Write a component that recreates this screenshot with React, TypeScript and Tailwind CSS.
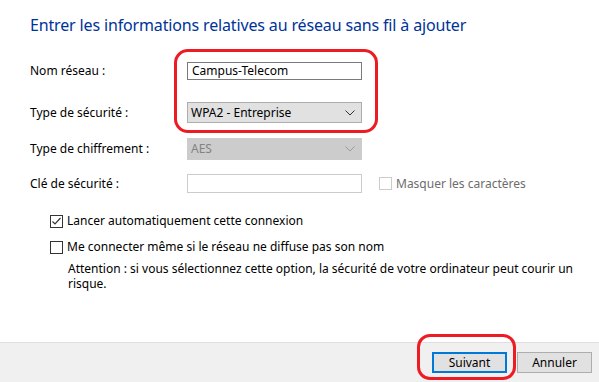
import React from 'react';

const Chevron = ({ color }: { color: string }) => (
  <svg width="10" height="6" viewBox="0 0 10 6" className="shrink-0">
    <polyline points="0.5,0.5 5,5 9.5,0.5" fill="none" stroke={color} strokeWidth="1" />
  </svg>
);

const CheckBox = ({ checked, disabled }: { checked?: boolean; disabled?: boolean }) => (
  <div
    className={`w-[13px] h-[13px] border bg-white flex items-center justify-center shrink-0 ${
      disabled ? 'border-[#cccccc]' : 'border-[#333333]'
    }`}
  >
    {checked && (
      <svg width="11" height="11" viewBox="0 0 11 11">
        <polyline points="1.5,5.5 4,8 9.5,2" fill="none" stroke="#333333" strokeWidth="1.2" />
      </svg>
    )}
  </div>
);

export default function App() {
  return (
    <div className="relative w-[599px] h-[382px] bg-white flex flex-col overflow-hidden text-[12px] text-black font-['Segoe_UI','Noto_Sans',sans-serif]">
      <div className="flex-1 pl-[30px]">
        <h1 className="pt-[14px] text-[16px] leading-[22px] tracking-[-0.15px] text-[#003399]">
          Entrer les informations relatives au réseau sans fil à ajouter
        </h1>

        {/* champs */}
        <div className="mt-[26px] flex items-center h-[18px]">
          <span className="w-[157px]">Nom réseau :</span>
          <div className="w-[175px] h-[18px] border border-[#7a7a7a] flex items-center px-[4px]">
            Campus-Telecom
          </div>
        </div>

        <div className="mt-[22px] flex items-center h-[21px]">
          <span className="w-[157px]">Type de sécurité :</span>
          <div className="w-[175px] h-[21px] border border-[#adadad] bg-[#e1e1e1] flex items-center justify-between pl-[3px] pr-[6px]">
            <span>WPA2 - Entreprise</span>
            <Chevron color="#333333" />
          </div>
        </div>

        <div className="mt-[15px] flex items-center h-[22px]">
          <span className="w-[157px]">Type de chiffrement :</span>
          <div className="w-[175px] h-[22px] border border-[#cccccc] bg-[#cccccc] text-[#838383] flex items-center justify-between pl-[3px] pr-[6px]">
            <span>AES</span>
            <Chevron color="#9a9a9a" />
          </div>
        </div>

        <div className="mt-[14px] flex items-center h-[19px]">
          <span className="w-[157px]">Clé de sécurité :</span>
          <div className="w-[175px] h-[19px] border border-[#cccccc] bg-white" />
          <div className="ml-[17px] flex items-center gap-[4px] text-[#6d6d6d]">
            <CheckBox disabled />
            <span>Masquer les caractères</span>
          </div>
        </div>

        {/* options */}
        <div className="mt-[21px] ml-[20px] flex items-center gap-[4px] h-[14px]">
          <CheckBox checked />
          <span>Lancer automatiquement cette connexion</span>
        </div>

        <div className="mt-[12px] ml-[20px] flex items-center gap-[4px] h-[14px]">
          <CheckBox />
          <span>Me connecter même si le réseau ne diffuse pas son nom</span>
        </div>

        <p className="mt-[7px] ml-[38px] w-[515px] leading-[15px]">
          Attention : si vous sélectionnez cette option, la sécurité de votre ordinateur peut courir un risque.
        </p>
      </div>

      {/* pied de page */}
      <div className="h-[40px] bg-[#f0f0f0] border-t border-[#dfdfdf] flex items-start justify-end gap-[10px] pt-[9px] pr-[7px]">
        <button className="w-[75px] h-[21px] bg-[#e1e1e1] border-2 border-[#0078d7] flex items-center justify-center">
          Suivant
        </button>
        <button className="w-[75px] h-[21px] bg-[#e1e1e1] border border-[#adadad] flex items-center justify-center">
          Annuler
        </button>
      </div>

      {/* annotations rouges */}
      <div className="absolute left-[174px] top-[49px] w-[204px] h-[84px] border-[3px] border-[#ed1c24] rounded-[14px] pointer-events-none" />
      <div className="absolute left-[417px] top-[334px] w-[99px] h-[46px] border-[3px] border-[#ed1c24] rounded-[13px] pointer-events-none" />
    </div>
  );
}
